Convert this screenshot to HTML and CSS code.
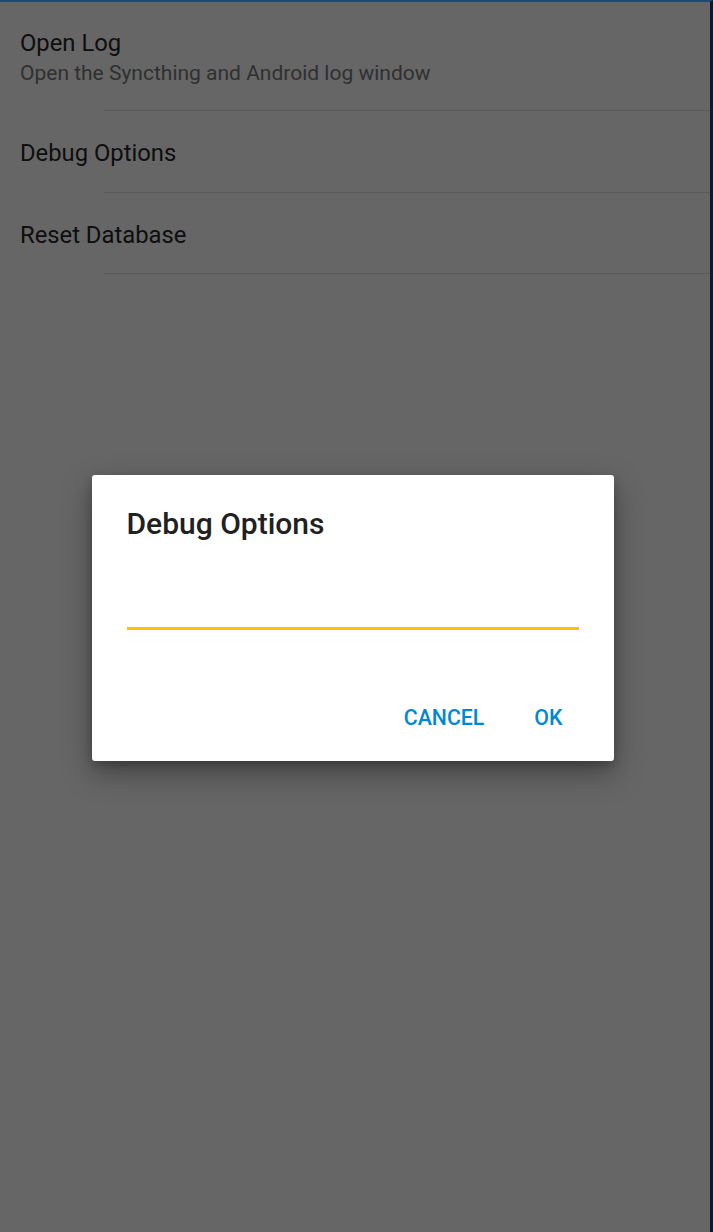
FILE: index.html
```html
<!DOCTYPE html>
<html>
<head>
<meta charset="utf-8">
<link rel="stylesheet" href="styles.css">
</head>
<body>
<div class="screen">
  <div class="list">
    <div class="row row-two">
      <div class="title">Open Log</div>
      <div class="summary">Open the Syncthing and Android log window</div>
    </div>
    <div class="row">
      <div class="title">Debug Options</div>
    </div>
    <div class="row">
      <div class="title">Reset Database</div>
    </div>
  </div>
  <div class="scrim">
    <div class="dialog">
      <div class="dialog-title">Debug Options</div>
      <div class="field"></div>
      <div class="actions">
        <span class="btn">CANCEL</span>
        <span class="btn">OK</span>
      </div>
    </div>
  </div>
</div>
</body>
</html>
```
FILE: styles.css
```css
html, body {
  margin: 0;
  padding: 0;
}
body {
  background: #666666;
  font-family: Roboto, "Noto Sans", sans-serif;
  width: 713px;
  height: 1232px;
  overflow: hidden;
}
.screen {
  position: relative;
  width: 710px;
  height: 1230px;
  border-top: 2px solid #1d4a6e;
  border-right: 3px solid #111634;
  background: #666666;
}
.list {
  display: flex;
  flex-direction: column;
}
.row {
  position: relative;
  height: 81.5px;
  padding-left: 20px;
  padding-top: 3px;
  box-sizing: border-box;
  display: flex;
  flex-direction: column;
  justify-content: center;
}
.row-two {
  height: 109px;
  justify-content: flex-start;
  padding-top: 27px;
}
.row::after {
  content: "";
  position: absolute;
  left: 104px;
  right: 0;
  bottom: 0;
  height: 1px;
  background: #5a5a5a;
}
.title {
  font-size: 23.8px;
  color: #0e0e0e;
  line-height: 28px;
}
.summary {
  font-size: 21px;
  color: #303030;
  line-height: 24px;
  margin-top: 4px;
}
.scrim {
  position: absolute;
  inset: 0;
  display: flex;
  align-items: flex-start;
  justify-content: center;
}
.dialog {
  margin-top: 473px;
  margin-left: -5px;
  width: 522px;
  height: 286px;
  box-sizing: border-box;
  background: #ffffff;
  border-radius: 3px;
  box-shadow: 0 12px 30px rgba(0,0,0,0.35), 0 4px 10px rgba(0,0,0,0.2);
  padding: 31px 35px 0 35px;
  display: flex;
  flex-direction: column;
}
.dialog-title {
  font-size: 30px;
  font-weight: 500;
  color: #212121;
  line-height: 36px;
}
.field {
  margin-top: 85px;
  height: 3px;
  background: #ffc107;
}
.actions {
  display: flex;
  justify-content: flex-end;
  gap: 50px;
  margin-top: 76px;
  padding-right: 16px;
}
.btn {
  font-size: 21.3px;
  font-weight: 500;
  color: #0288d1;
  line-height: 24px;
}
```
